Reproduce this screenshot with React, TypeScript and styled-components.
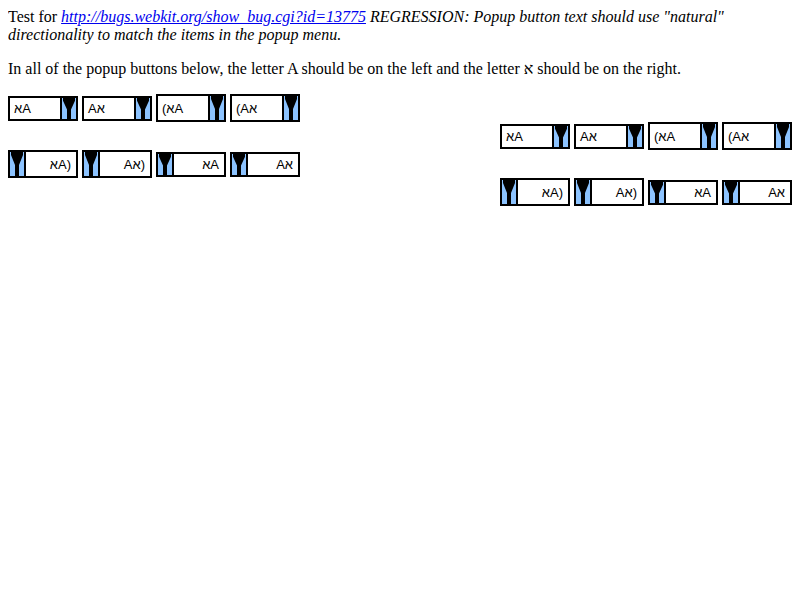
import React from 'react';
import styled, { createGlobalStyle } from 'styled-components';

const GlobalStyle = createGlobalStyle`
  html, body {
    background: #fff;
  }
  body {
    margin: 8px;
    color: #000;
    font-family: "Liberation Serif", "Times New Roman", serif;
    font-size: 16px;
  }
`;

const Para = styled.p`
  margin: 0 0 16px;
  line-height: 18px;
`;

const Em = styled.em`
  font-style: italic;
`;

const Link = styled.a`
  color: #0000ee;
  text-decoration: underline;
`;

const Stack = styled.div`
  display: flex;
  flex-direction: column;
`;

const Row = styled.div<{ $end?: boolean }>`
  display: flex;
  gap: 4px;
  height: 28px;
  align-items: flex-start;
  justify-content: ${(p) => (p.$end ? 'flex-end' : 'flex-start')};
`;

const Popup = styled.div<{ $tall?: boolean; $arrowLeft?: boolean }>`
  box-sizing: border-box;
  width: 70px;
  height: ${(p) => (p.$tall ? '28px' : '25px')};
  margin-top: ${(p) => (p.$tall ? '0' : '2px')};
  border: 2px solid #000;
  background: #fff;
  display: flex;
  flex-direction: ${(p) => (p.$arrowLeft ? 'row-reverse' : 'row')};
  align-items: stretch;
`;

const Label = styled.span<{ $right?: boolean }>`
  flex: 1;
  display: flex;
  align-items: center;
  justify-content: ${(p) => (p.$right ? 'flex-end' : 'flex-start')};
  padding: 0 5px 0 4px;
  font-family: "Liberation Sans", Arial, sans-serif;
  font-size: 13px;
  white-space: nowrap;
`;

/* characters are shown in the order they are typed */
const Glyphs = styled.span`
  direction: ltr;
  unicode-bidi: bidi-override;
`;

const ArrowBox = styled.span<{ $left?: boolean }>`
  width: 14px;
  flex: none;
  background: #8cc3ff;
  border-left: ${(p) => (p.$left ? 'none' : '2px solid #000')};
  border-right: ${(p) => (p.$left ? '2px solid #000' : 'none')};
  display: flex;

  svg {
    width: 100%;
    height: 100%;
    display: block;
  }
`;

const Arrow: React.FC<{ left?: boolean }> = ({ left }) => (
  <ArrowBox $left={left}>
    <svg viewBox="0 0 14 24" preserveAspectRatio="none">
      <polygon points="1,0 13,0 13,3 9,13 9,24 5,24 5,13 1,3" fill="#000" />
    </svg>
  </ArrowBox>
);

type Item = { text: string; tall?: boolean };

const PopupButton: React.FC<{ item: Item; arrowLeft?: boolean }> = ({ item, arrowLeft }) => (
  <Popup $tall={item.tall} $arrowLeft={arrowLeft}>
    <Label $right={arrowLeft}>
      <Glyphs>{item.text}</Glyphs>
    </Label>
    <Arrow left={arrowLeft} />
  </Popup>
);

const ltrItems: Item[] = [
  { text: '\u05D0A' },
  { text: 'A\u05D0' },
  { text: '(\u05D0A', tall: true },
  { text: '(A\u05D0', tall: true },
];

const rtlItems: Item[] = [
  { text: '\u05D0A)', tall: true },
  { text: 'A\u05D0)', tall: true },
  { text: '\u05D0A' },
  { text: 'A\u05D0' },
];

export default function App() {
  return (
    <>
      <GlobalStyle />
      <Para>
        Test for{' '}
        <Em>
          <Link href="#">http://bugs.webkit.org/show_bug.cgi?id=13775</Link> REGRESSION: Popup button
          text should use "natural" directionality to match the items in the popup menu.
        </Em>
      </Para>
      <Para>
        In all of the popup buttons below, the letter A should be on the left and the letter {'\u05D0'} should
        be on the right.
      </Para>
      <Stack>
        <Row>
          {ltrItems.map((it) => (
            <PopupButton key={it.text} item={it} />
          ))}
        </Row>
        <Row $end>
          {ltrItems.map((it) => (
            <PopupButton key={it.text} item={it} />
          ))}
        </Row>
        <Row>
          {rtlItems.map((it) => (
            <PopupButton key={it.text} item={it} arrowLeft />
          ))}
        </Row>
        <Row $end>
          {rtlItems.map((it) => (
            <PopupButton key={it.text} item={it} arrowLeft />
          ))}
        </Row>
      </Stack>
    </>
  );
}
